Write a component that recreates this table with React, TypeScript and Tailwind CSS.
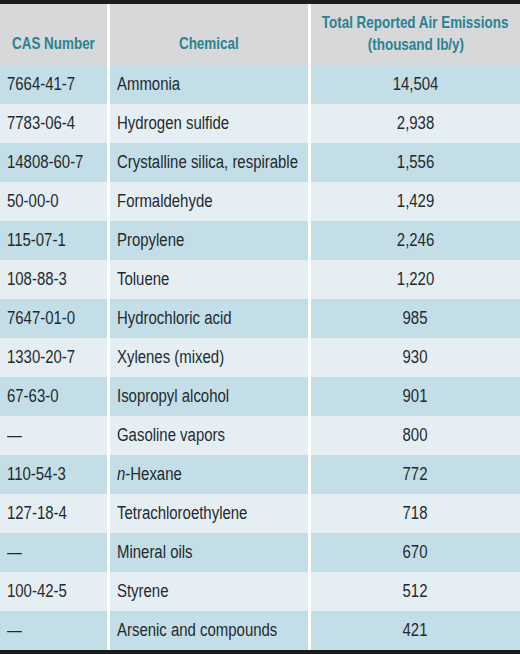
import React from "react";

type Row = { cas: string; chem: React.ReactNode; amount: string };

const rows: Row[] = [
  { cas: "7664-41-7", chem: "Ammonia", amount: "14,504" },
  { cas: "7783-06-4", chem: "Hydrogen sulfide", amount: "2,938" },
  { cas: "14808-60-7", chem: "Crystalline silica, respirable", amount: "1,556" },
  { cas: "50-00-0", chem: "Formaldehyde", amount: "1,429" },
  { cas: "115-07-1", chem: "Propylene", amount: "2,246" },
  { cas: "108-88-3", chem: "Toluene", amount: "1,220" },
  { cas: "7647-01-0", chem: "Hydrochloric acid", amount: "985" },
  { cas: "1330-20-7", chem: "Xylenes (mixed)", amount: "930" },
  { cas: "67-63-0", chem: "Isopropyl alcohol", amount: "901" },
  { cas: "—", chem: "Gasoline vapors", amount: "800" },
  {
    cas: "110-54-3",
    chem: (
      <>
        <i>n</i>-Hexane
      </>
    ),
    amount: "772",
  },
  { cas: "127-18-4", chem: "Tetrachloroethylene", amount: "718" },
  { cas: "—", chem: "Mineral oils", amount: "670" },
  { cas: "100-42-5", chem: "Styrene", amount: "512" },
  { cas: "—", chem: "Arsenic and compounds", amount: "421" },
];

// no condensed face installed, so squeeze Liberation Sans horizontally
const Left = ({ children }: { children: React.ReactNode }) => (
  <span className="inline-block whitespace-nowrap origin-left scale-x-[0.83]">
    {children}
  </span>
);

const Center = ({ children }: { children: React.ReactNode }) => (
  <span className="inline-block whitespace-nowrap origin-center scale-x-[0.83]">
    {children}
  </span>
);

const Head = ({ children }: { children: React.ReactNode }) => (
  <span className="inline-block whitespace-nowrap origin-center scale-x-[0.79]">
    {children}
  </span>
);

export default function App() {
  return (
    <div className="w-[520px] h-[654px] bg-[#1c1c1c] pt-[4px] overflow-hidden font-['Liberation_Sans',Arial,sans-serif]">
      <div className="grid grid-cols-[107px_198px_209px] gap-x-[3px] bg-white">
        <div className="h-[61px] bg-[#d6d8d9] flex items-center justify-center pt-[18px] text-[17px] font-bold text-[#2b8291]">
          <Head>CAS Number</Head>
        </div>
        <div className="h-[61px] bg-[#d6d8d9] flex items-center justify-center pt-[18px] text-[17px] font-bold text-[#2b8291]">
          <Head>Chemical</Head>
        </div>
        <div className="h-[61px] min-w-0 bg-[#d6d8d9] flex flex-col items-center justify-center pb-[2px] text-[17px] leading-[22px] font-bold text-[#2b8291] text-center">
          <Head>Total Reported Air Emissions</Head>
          <Head>(thousand lb/y)</Head>
        </div>
        {rows.map((r, i) => {
          const bg = i % 2 === 0 ? "bg-[#c3dee6]" : "bg-[#e5eff3]";
          return (
            <React.Fragment key={i}>
              <div
                className={`h-[39px] ${bg} flex items-center pl-[7px] text-[18px] text-[#1f2a31]`}
              >
                <Left>{r.cas}</Left>
              </div>
              <div
                className={`h-[39px] ${bg} flex items-center pl-[7px] text-[18px] text-[#1f2a31]`}
              >
                <Left>{r.chem}</Left>
              </div>
              <div
                className={`h-[39px] ${bg} flex items-center justify-center text-[18px] text-[#1f2a31]`}
              >
                <Center>{r.amount}</Center>
              </div>
            </React.Fragment>
          );
        })}
      </div>
    </div>
  );
}
